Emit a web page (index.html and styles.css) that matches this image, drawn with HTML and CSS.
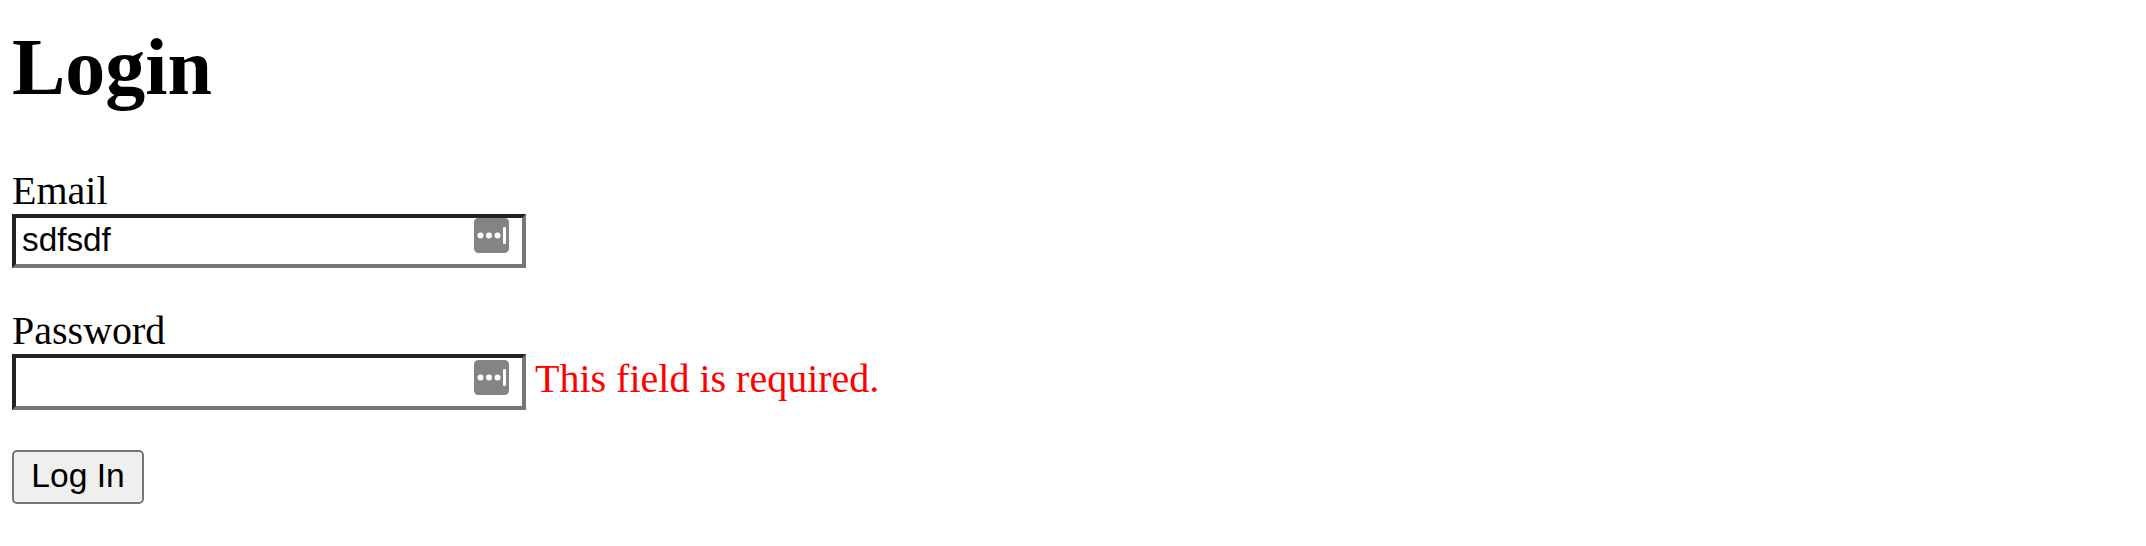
FILE: index.html
```html
<!DOCTYPE html>
<html lang="en">
<head>
<meta charset="utf-8">
<title>Login</title>
<link rel="stylesheet" href="styles.css">
</head>
<body>
<h1 class="title">Login</h1>
<form class="form">
  <div class="field">
    <label class="label" for="email">Email</label>
    <div class="control">
      <span class="input-wrap">
        <input class="input" id="email" type="text" value="sdfsdf">
        <svg class="key" viewBox="0 0 35 35" aria-hidden="true"><rect width="35" height="35" rx="4.5" fill="#848484"/><circle cx="6.5" cy="17.5" r="3" fill="#fff"/><circle cx="15" cy="17.5" r="3" fill="#fff"/><circle cx="23.5" cy="17.5" r="3" fill="#fff"/><rect x="29" y="9" width="3" height="17" rx="1.2" fill="#fff"/></svg>
      </span>
    </div>
  </div>
  <div class="field">
    <label class="label" for="password">Password</label>
    <div class="control">
      <span class="input-wrap input-wrap-tall">
        <input class="input" id="password" type="password">
        <svg class="key" viewBox="0 0 35 35" aria-hidden="true"><rect width="35" height="35" rx="4.5" fill="#848484"/><circle cx="6.5" cy="17.5" r="3" fill="#fff"/><circle cx="15" cy="17.5" r="3" fill="#fff"/><circle cx="23.5" cy="17.5" r="3" fill="#fff"/><rect x="29" y="9" width="3" height="17" rx="1.2" fill="#fff"/></svg>
      </span>
      <span class="error">This field is required.</span>
    </div>
  </div>
  <button class="submit" type="button">Log In</button>
</form>
</body>
</html>
```
FILE: styles.css
```css
html, body {
  background: #fff;
}
body {
  margin: 0;
  padding: 12px;
  font-family: "Liberation Serif", serif;
  font-size: 40px;
  line-height: 46px;
  color: #000;
}
.title {
  margin: 9px 0 55px;
  font-size: 80px;
  line-height: 92px;
  font-weight: 700;
}
.field {
  margin-bottom: 40px;
}
.label {
  display: block;
}
.control {
  display: flex;
  align-items: center;
  gap: 9px;
}
.input-wrap {
  position: relative;
  display: block;
  width: 514px;
  height: 54px;
}
.input-wrap-tall {
  height: 56px;
}
.input {
  box-sizing: border-box;
  display: block;
  width: 100%;
  height: 100%;
  margin: 0;
  padding: 0 60px 3px 6px;
  border-style: solid;
  border-width: 4px;
  border-color: #222 #767676 #767676 #222;
  background: #fff;
  font-family: "Liberation Sans", sans-serif;
  font-size: 33.3px;
  color: #000;
  outline: none;
}
.key {
  position: absolute;
  top: 4px;
  right: 17px;
  width: 35px;
  height: 35px;
}
.input-wrap-tall .key {
  top: 6px;
}
.error {
  margin-bottom: 6px;
  color: #f00;
}
.submit {
  display: block;
  box-sizing: border-box;
  width: 132px;
  height: 54px;
  padding: 0 0 2px;
  border: 2px solid #767676;
  border-radius: 5px;
  background: #efefef;
  font-family: "Liberation Sans", sans-serif;
  font-size: 33.6px;
  color: #000;
}
```
